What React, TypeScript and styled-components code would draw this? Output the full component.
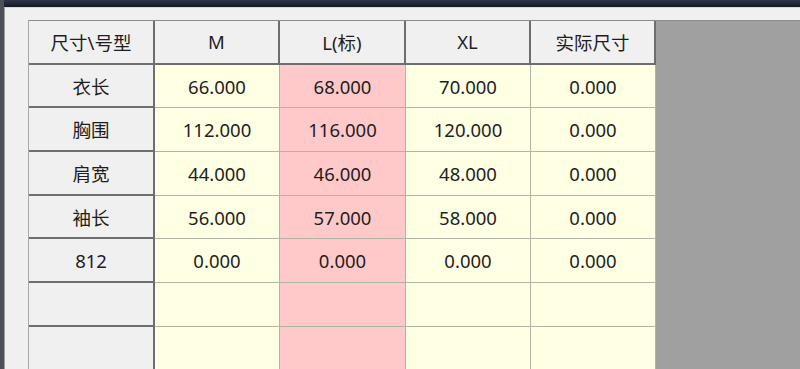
import { Fragment } from "react";
import styled, { createGlobalStyle } from "styled-components";

const GlobalStyle = createGlobalStyle`
  html, body {
    margin: 0;
    padding: 0;
    overflow: hidden;
    background: #f0f0f0;
  }
`;

const Window = styled.div`
  height: 369px;
  display: flex;
  flex-direction: column;
  background: #f0f0f0;
  border-left: 4px solid #4e5058;
  box-sizing: border-box;
  font-family: "Noto Sans", "Noto Sans CJK SC", sans-serif;
`;

const TitleBar = styled.div`
  height: 7px;
  flex-shrink: 0;
  background: linear-gradient(#30364a, #151821);
`;

const Body = styled.div`
  flex: 1;
  display: flex;
  min-height: 0;
  padding: 12px 0 0 23px;
  border-left: 1px solid #9c9c9c;
  border-top: 1px solid #d8d8d8;
`;

const Grid = styled.div`
  flex: 1;
  display: grid;
  grid-template-columns: 126px 125px 126px 125px 125px;
  grid-auto-rows: 43.7px;
  align-content: start;
  background: #a0a0a0;
  border-left: 1px solid #a8a8a8;
  border-top: 1px solid #8c8c8c;
  overflow: hidden;
`;

type Kind = "head" | "data" | "standard";

const Cell = styled.div<{ $kind: Kind }>`
  display: flex;
  align-items: center;
  justify-content: center;
  box-sizing: border-box;
  font-size: 18.5px;
  color: #1e1e1e;
  background: ${(p) =>
    p.$kind === "head" ? "#f0f0f0" : p.$kind === "standard" ? "#ffc9c9" : "#ffffe3"};
  border-right: ${(p) => (p.$kind === "head" ? "2px solid #6e6e6e" : "1px solid #b4b4a4")};
  border-bottom: ${(p) => (p.$kind === "head" ? "2px solid #6e6e6e" : "1px solid #b4b4a4")};
`;

const sizes = ["M", "L(标)", "XL", "实际尺寸"];

const rows: { name: string; values: string[] }[] = [
  { name: "衣长", values: ["66.000", "68.000", "70.000", "0.000"] },
  { name: "胸围", values: ["112.000", "116.000", "120.000", "0.000"] },
  { name: "肩宽", values: ["44.000", "46.000", "48.000", "0.000"] },
  { name: "袖长", values: ["56.000", "57.000", "58.000", "0.000"] },
  { name: "812", values: ["0.000", "0.000", "0.000", "0.000"] },
  { name: "", values: ["", "", "", ""] },
  { name: "", values: ["", "", "", ""] },
];

const App = () => {
  return (
    <Window>
      <GlobalStyle />
      <TitleBar />
      <Body>
        <Grid>
          <Cell $kind="head">尺寸\号型</Cell>
          {sizes.map((s) => (
            <Cell key={s} $kind="head">
              {s}
            </Cell>
          ))}
          {rows.map((r, i) => (
            <Fragment key={i}>
              <Cell $kind="head">{r.name}</Cell>
              {r.values.map((v, j) => (
                <Cell key={j} $kind={j === 1 ? "standard" : "data"}>
                  {v}
                </Cell>
              ))}
            </Fragment>
          ))}
        </Grid>
      </Body>
    </Window>
  );
};

export default App;
